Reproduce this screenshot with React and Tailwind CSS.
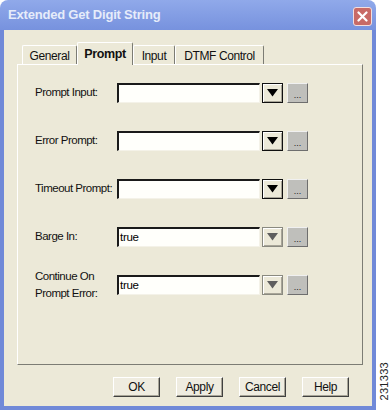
const rows = [
  { label: ["Prompt Input:"], value: "" },
  { label: ["Error Prompt:"], value: "" },
  { label: ["Timeout Prompt:"], value: "" },
  { label: ["Barge In:"], value: "true", dim: true },
  { label: ["Continue On", "Prompt Error:"], value: "true", dim: true },
];

const tabs = [
  { name: "General", w: "w-[55px]" },
  { name: "Prompt", w: "w-[56px]", active: true },
  { name: "Input", w: "w-[42px]" },
  { name: "DTMF Control", w: "w-[89px]" },
];

const DropArrow = ({ dim }) => (
  <div
    className={`w-[21px] h-[20px] bg-[#ece9d8] border ${
      dim ? "border-[#8a8a80]" : "border-[#101010]"
    } flex items-center justify-center shadow-[inset_1px_1px_0_#ffffff,inset_-1px_-1px_0_#a8a598]`}
  >
    <svg width="11" height="8" viewBox="0 0 11 8">
      <path d="M0 0 H11 L5.5 7.5 Z" fill={dim ? "#5e5e5e" : "#000"} />
    </svg>
  </div>
);

const Field = ({ label, value, dim }) => (
  <div className="flex items-center h-[20px]">
    <div className="w-[82px] text-[11.5px] leading-[17px] text-[#111] tracking-[-0.5px] pb-[1px]">
      {label.map((l) => (
        <div key={l}>{l}</div>
      ))}
    </div>
    <div className="w-[143px] h-[20px] bg-[#fffffb] border-t-2 border-l-2 border-t-[#1a1a1a] border-l-[#1a1a1a] border-b border-r border-b-[#f4f2e8] border-r-[#f4f2e8] text-[11.5px] leading-[16px] pl-[1px] tracking-[-0.3px] text-black">
      {value}
    </div>
    <div className="ml-[2px]">
      <DropArrow dim={dim} />
    </div>
    <div className="ml-[4px] w-[21px] h-[20px] bg-[#bfbfbb] border-t border-l border-t-[#f0f0f0] border-l-[#f0f0f0] border-b border-r border-b-[#6e6e6e] border-r-[#6e6e6e] flex items-end justify-center pb-[3px] text-[9px] leading-[8px] text-[#222]">
      ...
    </div>
  </div>
);

export default function App() {
  return (
    <div
      className="w-[392px] h-[410px] bg-white flex overflow-hidden"
      style={{ fontFamily: '"Liberation Sans", Arial, sans-serif' }}
    >
      <div className="w-[378px] h-[410px] flex flex-col rounded-t-[8px] overflow-hidden">
        <div className="h-[30px] bg-linear-to-b from-[#90a9ea] to-[#7792de] flex items-center justify-between pl-[8px] pr-[4px]">
          <span className="text-[13px] font-bold text-[#e6ecfa] tracking-[-0.2px]">
            Extended Get Digit String
          </span>
          <div className="w-[19px] h-[19px] mt-[2px] rounded-[3px] bg-[#c86a66] border border-[#f3dede] flex items-center justify-center">
            <svg width="11" height="11" viewBox="0 0 11 11">
              <path d="M1.5 1.5 L9.5 9.5 M9.5 1.5 L1.5 9.5" stroke="#fff" strokeWidth="2.2" strokeLinecap="round" />
            </svg>
          </div>
        </div>
        <div className="flex-1 bg-[#ece9d8] border-x-4 border-b-4 border-[#7089d8] flex flex-col pt-[12px] pl-[13px] pr-[11px]">
          <div className="flex items-end ml-[5px] h-[22px] relative z-10">
            {tabs.map((t) =>
              t.active ? (
                <div
                  key={t.name}
                  className={`${t.w} h-[23px] -mb-px bg-[#ece9d8] border-t border-l border-t-white border-l-white border-r border-r-[#7c7c74] rounded-t-[2px] flex items-start justify-center pt-[2px] text-[12.5px] font-bold text-[#111] tracking-[-0.4px]`}
                >
                  {t.name}
                </div>
              ) : (
                <div
                  key={t.name}
                  className={`${t.w} h-[19px] bg-[#ece9d8] border-t border-l border-t-white border-l-white border-r border-r-[#7c7c74] rounded-t-[2px] flex items-center justify-center pt-[2px] text-[12px] text-[#111] tracking-[-0.4px]`}
                >
                  {t.name}
                </div>
              )
            )}
          </div>
          <div className="w-[346px] h-[301px] border border-t-white border-l-white border-r-[#7c7c74] border-b-[#7c7c74] pt-[18px] pl-[17px] flex flex-col gap-[28px]">
            {rows.map((r) => (
              <Field key={r.label.join()} {...r} />
            ))}
          </div>
          <div className="flex gap-[16px] mt-[12px] ml-[96px]">
            {["OK", "Apply", "Cancel", "Help"].map((b) => (
              <div
                key={b}
                className="w-[47px] h-[20px] bg-[#efece0] border border-t-white border-l-white border-r-[#404040] border-b-[#404040] shadow-[inset_-1px_-1px_0_#a8a598] flex items-center justify-center text-[12px] text-[#111] tracking-[-0.4px]"
              >
                {b}
              </div>
            ))}
          </div>
        </div>
      </div>
      <div className="flex-1 flex items-end justify-center pb-[9px]">
        <span className="[writing-mode:vertical-rl] rotate-180 text-[11px] text-[#222] tracking-[0.3px]">
          231333
        </span>
      </div>
    </div>
  );
}
